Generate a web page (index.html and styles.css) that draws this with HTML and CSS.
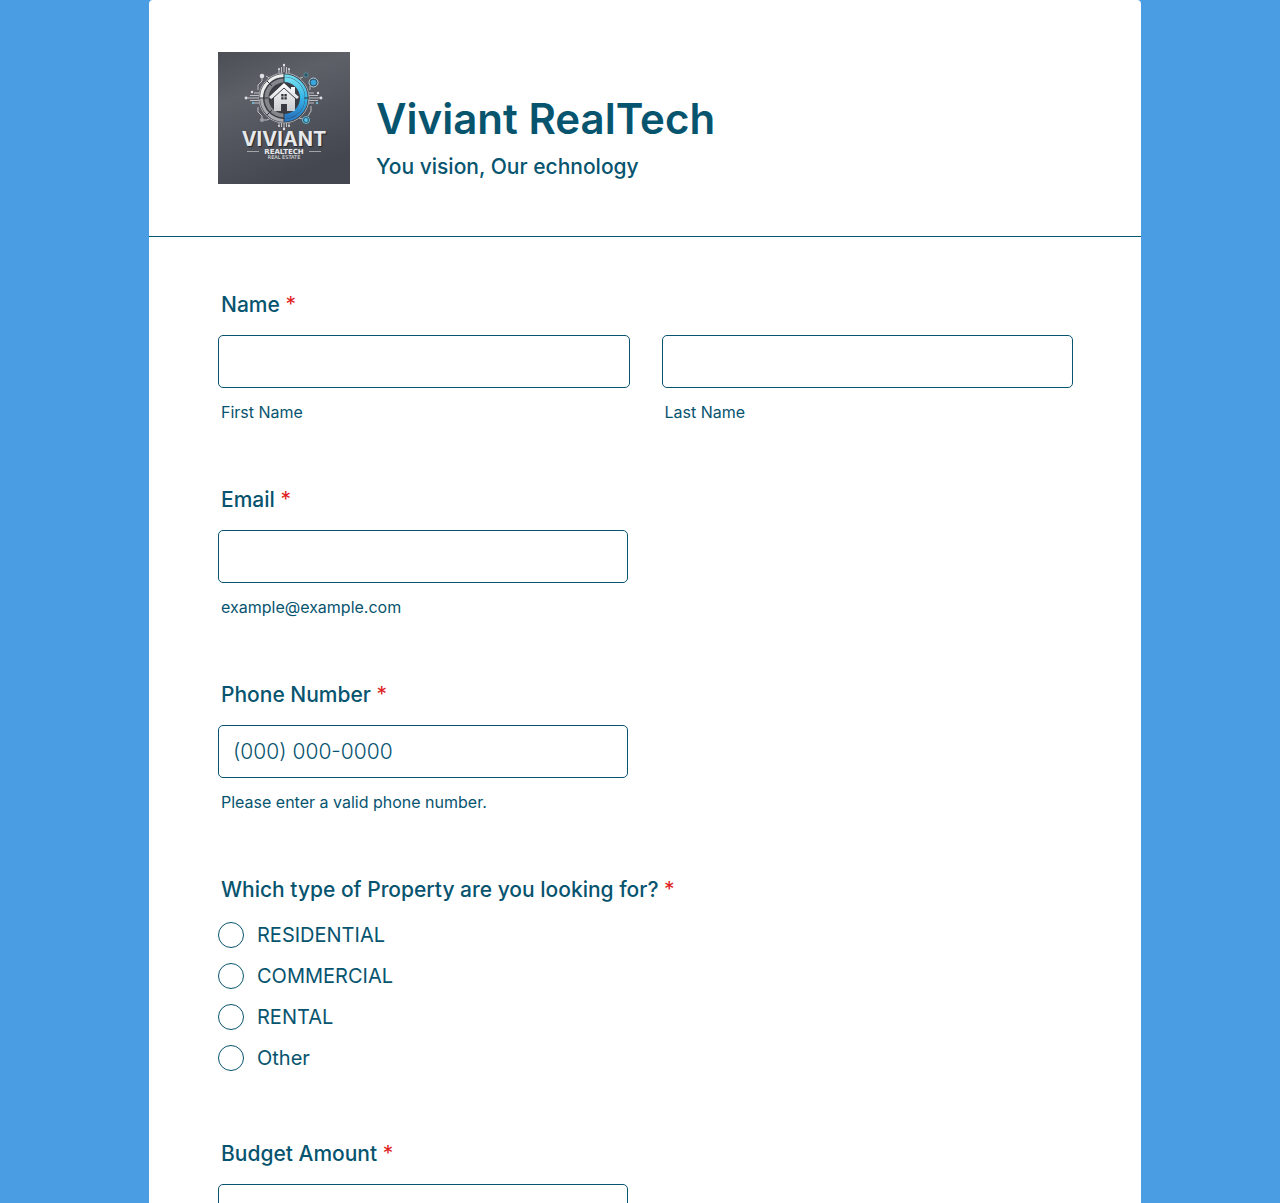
FILE: index.html
```html
<!DOCTYPE html>
<html lang="en">
<head>
<meta charset="utf-8">
<meta name="viewport" content="width=device-width, initial-scale=1">
<title>Viviant RealTech</title>
<link rel="stylesheet" href="styles.css">
</head>
<body>
<main class="page">
<form class="card">
  <header class="header">
    <svg class="logo" viewBox="0 0 132 132" role="img" aria-label="Viviant RealTech logo">
      <defs>
        <linearGradient id="slate" x1="0" y1="0" x2="0.4" y2="1">
          <stop offset="0" stop-color="#4b4e54"/><stop offset="0.35" stop-color="#5d6067"/><stop offset="1" stop-color="#44474f"/>
        </linearGradient>
        <linearGradient id="cyan" x1="0" y1="0" x2="0" y2="1">
          <stop offset="0" stop-color="#6fdcf0"/><stop offset="0.5" stop-color="#35b4e8"/><stop offset="1" stop-color="#2879c4"/>
        </linearGradient>
        <linearGradient id="silver" x1="0" y1="0" x2="0" y2="1">
          <stop offset="0" stop-color="#fff"/><stop offset="1" stop-color="#c9cbcf"/>
        </linearGradient>
      </defs>
      <rect width="132" height="132" fill="url(#slate)"/>
      <!-- circuit traces -->
      <g fill="none" stroke="#c9cbd0" stroke-width="0.9">
        <path d="M61 22v-5M63.500 22v-7M66 22v-9M68.500 22v-7M71 22v-5"/>
        <path d="M61 69v5M63.500 69v6M66 69v8M68.500 69v6M71 69v5"/>
        <path d="M42 41h-6M42 43.500h-10M42 46h-14M42 48.500h-10M42 51h-6"/>
        <path d="M90 41h6M90 43.500h10M90 46h13M90 48.500h10M90 51h6"/>
        <path d="M44 24v5l-4 4v5M48 24l5 3M40 55v5l4 4v4M44 68h5l4-2M85 25l-5 2M92 34v4M85 67l-4-1M90 64l3-5v-5"/>
      </g>
      <g fill="#dfe1e4">
        <circle cx="66" cy="13" r="1.200"/><circle cx="61" cy="17" r="1"/><circle cx="71" cy="17" r="1"/>
        <circle cx="66" cy="77" r="1.200"/><circle cx="61" cy="74" r="1"/><circle cx="71" cy="74" r="1"/>
        <circle cx="28" cy="46" r="1.400"/><circle cx="34" cy="40" r="1.200"/><circle cx="35" cy="51" r="1.200" fill="#73b4cc"/>
        <circle cx="103" cy="46" r="1.400"/><circle cx="100" cy="41" r="1.200"/><circle cx="99" cy="51" r="1.200" fill="#73b4cc"/>
        <circle cx="44" cy="24" r="2.300"/><circle cx="44" cy="68" r="2.100" fill="#9b9da2"/>
      </g>
      <!-- ring -->
      <circle cx="66" cy="46" r="25" fill="#3a3d44" stroke="#a4a7ad" stroke-width="1"/>
      <g fill="none">
        <path d="M66 23.500A22.500 22.500 0 0 0 43.500 46" stroke="#eceded" stroke-width="3"/>
        <path d="M43.500 46A22.500 22.500 0 0 0 66 68.500" stroke="#a9abaf" stroke-width="3"/>
        <path d="M66 28.500A17.500 17.500 0 0 0 66 63.500" stroke="#85878c" stroke-width="4"/>
        <path d="M66 23.500A22.500 22.500 0 0 1 66 68.500" stroke="url(#cyan)" stroke-width="2.500"/>
        <path d="M66 27.500A18.500 18.500 0 0 1 66 64.500" stroke="url(#cyan)" stroke-width="5"/>
        <path d="M66 20v50M41 46h9M49 29l5 5M49 63l5-5M86 46h5" stroke="#33363d" stroke-width="1"/>
      </g>
      <!-- blue nodes -->
      <circle cx="88" cy="23" r="2.200" fill="#355361" stroke="#519bab" stroke-width="0.800"/>
      <circle cx="95.500" cy="30.500" r="4.500" fill="#34566a" stroke="#b4cdd7" stroke-width="1"/><circle cx="95.500" cy="30.500" r="2.800" fill="#3aa5dd"/>
      <circle cx="88" cy="68" r="3.500" fill="#34566a" stroke="#64b9d8" stroke-width="1"/><circle cx="88" cy="68" r="1.900" fill="#58c4ea"/>
      <!-- house -->
      <path d="M51 45L66 31L73 37.500V35H77V41.500L81 45L79 47L77 45.500V59H69V52H63V59H56V45.500L53 47Z" fill="url(#silver)"/>
      <path d="M53.500 47.500L66 36L78.500 47.500" fill="none" stroke="#3b3e45" stroke-width="1"/>
      <path d="M63.200 42h2.400v2.400h-2.400zM66.400 42h2.400v2.400h-2.400zM63.200 45.200h2.400v2.400h-2.400zM66.400 45.200h2.400v2.400h-2.400z" fill="#34373e"/>
      <g class="logo-text" text-anchor="middle">
        <text class="logo-name" x="66" y="94">VIVIANT</text>
        <text class="logo-sub" x="66" y="102">REALTECH</text>
        <text class="logo-tag" x="66" y="107">REAL ESTATE</text>
      </g>
      <path d="M29 99.500h12M91 99.500h12" stroke="#b9bbbf" stroke-width="0.800"/>
    </svg>
    <div class="heading">
      <h1 class="title">Viviant RealTech</h1>
      <p class="subtitle">You vision, Our echnology</p>
    </div>
  </header>
  <div class="fields">
    <fieldset class="field">
      <legend class="label">Name <span class="required">*</span></legend>
      <div class="name-row">
        <div class="column">
          <input class="input" id="first" type="text" required>
          <label class="hint" for="first">First Name</label>
        </div>
        <div class="column">
          <input class="input" id="last" type="text" required>
          <label class="hint" for="last">Last Name</label>
        </div>
      </div>
    </fieldset>
    <div class="field">
      <label class="label" for="email">Email <span class="required">*</span></label>
      <div class="column half">
        <input class="input" id="email" type="email" aria-describedby="email-hint" required>
        <span class="hint" id="email-hint">example@example.com</span>
      </div>
    </div>
    <div class="field">
      <label class="label" for="phone">Phone Number <span class="required">*</span></label>
      <div class="column half">
        <input class="input" id="phone" type="tel" placeholder="(000) 000-0000" aria-describedby="phone-hint" required>
        <span class="hint" id="phone-hint">Please enter a valid phone number.</span>
      </div>
    </div>
    <fieldset class="field choices">
      <legend class="label">Which type of Property are you looking for? <span class="required">*</span></legend>
      <div class="options">
        <label class="option"><input class="radio" type="radio" name="property">RESIDENTIAL</label>
        <label class="option"><input class="radio" type="radio" name="property">COMMERCIAL</label>
        <label class="option"><input class="radio" type="radio" name="property">RENTAL</label>
        <label class="option"><input class="radio" type="radio" name="property">Other</label>
      </div>
    </fieldset>
    <div class="field">
      <label class="label" for="budget">Budget Amount <span class="required">*</span></label>
      <div class="column half">
        <input class="input" id="budget" type="text" required>
      </div>
    </div>
  </div>
</form>
</main>
</body>
</html>
```
FILE: styles.css
```css
* { box-sizing: border-box; }
body {
  margin: 0;
  background: #4a9de2;
  color: #07546f;
  font-family: Inter, "Liberation Sans", sans-serif;
}
.page {
  height: 100vh;
  overflow-y: auto;
  scrollbar-width: none;
  padding: 0 139px 0 149px;
}
.card { background: #fff; border-radius: 4px; }
.header {
  display: flex;
  align-items: flex-end;
  gap: 26px;
  padding: 52px 68px 52px 69px;
  border-bottom: 1px solid #07546f;
}
.logo { width: 132px; height: 132px; flex: none; }
.logo-text { fill: #e8e9eb; font-weight: 700; }
.logo-name { font-size: 20px; text-shadow: 1px 1px 1px #24272d; }
.logo-sub { font-family: "DejaVu Sans", sans-serif; font-size: 7px; }
.logo-tag { font-family: "DejaVu Sans", sans-serif; font-size: 5px; font-weight: 400; }
.title { margin: 0; font-size: 42px; line-height: 52px; font-weight: 600; }
.subtitle { margin: 8px 0 3px; font-size: 21px; line-height: 28px; font-weight: 500; }
.fields {
  display: flex;
  flex-direction: column;
  gap: 66px;
  padding: 56px 68px 64px 69px;
}
.field { min-width: 0; margin: 0; padding: 0; border: 0; }
.label {
  display: block;
  margin-bottom: 18px;
  padding: 0 0 0 3px;
  font-size: 21px;
  line-height: 24px;
  font-weight: 500;
}
.required { color: #e02020; font-weight: 400; }
.name-row { display: grid; grid-template-columns: 1fr 1fr; gap: 32px; }
.column { display: flex; flex-direction: column; gap: 14px; }
.half { width: 48%; }
.input {
  width: 100%;
  height: 53px;
  padding: 0 14px;
  border: 1px solid #07546f;
  border-radius: 5px;
  background: #fff;
  color: #07546f;
  font: 300 21px Inter, "Liberation Sans", sans-serif;
}
.input::placeholder { color: #07546f; opacity: 1; }
.hint { padding-left: 3px; font-size: 16px; line-height: 20px; font-weight: 375; }
.choices { margin-bottom: 5px; }
.choices .label { margin-bottom: 20px; }
.options { display: flex; flex-direction: column; gap: 15px; }
.option { display: flex; align-items: center; gap: 13px; font-size: 20px; line-height: 26px; font-weight: 375; }
.radio {
  appearance: none;
  width: 26px;
  height: 26px;
  margin: 0;
  border: 1px solid #07546f;
  border-radius: 50%;
  background: #fff;
}
.radio:checked { background: #07546f; box-shadow: inset 0 0 0 5px #fff; }
```
